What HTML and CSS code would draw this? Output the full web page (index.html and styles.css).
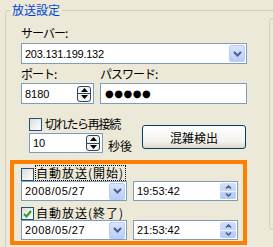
FILE: index.html
```html
<!DOCTYPE html>
<html lang="ja">
<head>
    <meta charset="UTF-8">
    <title>放送設定</title>
    <link rel="stylesheet" href="styles.css">
</head>
<body>

    <fieldset class="group">
        <legend class="group-title">放送設定</legend>
        <div class="group-body">
            <div class="main">

                <!-- server / port / password -->
                <div class="conn">
                    <div class="label">サーバー:</div>
                    <div class="combo server">
                        <span class="val server-val">203.131.199.132</span>
                        <span class="drop"><svg width="9" height="6" viewBox="0 0 9 6"><path d="M1 1l3.5 3.5L8 1" fill="none" stroke="#4D6185" stroke-width="2"/></svg></span>
                    </div>

                    <div class="pair">
                        <div class="field port-field">
                            <div class="label">ポート:</div>
                            <div class="edit port">
                                <span class="val">8180</span>
                                <span class="spin">
                                    <span class="spin-up"><svg width="7" height="4" viewBox="0 0 7 4"><path d="M0 4L3.5 0L7 4z" fill="#000"/></svg></span>
                                    <span class="spin-down"><svg width="7" height="4" viewBox="0 0 7 4"><path d="M0 0L3.5 4L7 0z" fill="#000"/></svg></span>
                                </span>
                            </div>
                        </div>
                        <div class="field pass-field">
                            <div class="label">パスワード:</div>
                            <div class="edit pass"><span class="dots">●●●●●</span></div>
                        </div>
                    </div>

                    <div class="retry">
                        <div class="retry-left">
                            <div class="check">
                                <span class="box"></span>
                                <span class="check-text retry-text">切れたら再接続</span>
                            </div>
                            <div class="retry-wait">
                                <div class="edit wait">
                                    <span class="val">10</span>
                                    <span class="spin">
                                        <span class="spin-up"><svg width="7" height="4" viewBox="0 0 7 4"><path d="M0 4L3.5 0L7 4z" fill="#000"/></svg></span>
                                        <span class="spin-down"><svg width="7" height="4" viewBox="0 0 7 4"><path d="M0 0L3.5 4L7 0z" fill="#000"/></svg></span>
                                    </span>
                                </div>
                                <span class="unit">秒後</span>
                            </div>
                        </div>
                        <button class="btn">混雑検出</button>
                    </div>
                </div>

                <!-- automatic broadcast start / end -->
                <div class="auto">
                    <div class="check auto-check first">
                        <span class="box"></span>
                        <span class="check-text focus">自動放送(開始)</span>
                    </div>
                    <div class="auto-row">
                        <div class="combo date">
                            <span class="val date-val">2008/05/27</span>
                            <span class="drop"><svg width="9" height="6" viewBox="0 0 9 6"><path d="M1 1l3.5 3.5L8 1" fill="none" stroke="#4D6185" stroke-width="2"/></svg></span>
                        </div>
                        <div class="edit time">
                            <span class="val">19:53:42</span>
                            <span class="spin-xp">
                                <span class="xp-up"><svg width="7" height="4" viewBox="0 0 7 4"><path d="M1 3.5l2.5-2.5 2.5 2.5" fill="none" stroke="#4D6185" stroke-width="1.6"/></svg></span>
                                <span class="xp-down"><svg width="7" height="4" viewBox="0 0 7 4"><path d="M1 0.5l2.5 2.5 2.5-2.5" fill="none" stroke="#4D6185" stroke-width="1.6"/></svg></span>
                            </span>
                        </div>
                    </div>

                    <div class="check auto-check second">
                        <span class="box checked"><svg width="9" height="8" viewBox="0 0 9 8"><path d="M1 4l2.5 2.5L8 1" fill="none" stroke="#21A121" stroke-width="2"/></svg></span>
                        <span class="check-text">自動放送(終了)</span>
                    </div>
                    <div class="auto-row">
                        <div class="combo date">
                            <span class="val date-val">2008/05/27</span>
                            <span class="drop"><svg width="9" height="6" viewBox="0 0 9 6"><path d="M1 1l3.5 3.5L8 1" fill="none" stroke="#4D6185" stroke-width="2"/></svg></span>
                        </div>
                        <div class="edit time">
                            <span class="val">21:53:42</span>
                            <span class="spin-xp">
                                <span class="xp-up"><svg width="7" height="4" viewBox="0 0 7 4"><path d="M1 3.5l2.5-2.5 2.5 2.5" fill="none" stroke="#4D6185" stroke-width="1.6"/></svg></span>
                                <span class="xp-down"><svg width="7" height="4" viewBox="0 0 7 4"><path d="M1 0.5l2.5 2.5 2.5-2.5" fill="none" stroke="#4D6185" stroke-width="1.6"/></svg></span>
                            </span>
                        </div>
                    </div>
                </div>

            </div>
            <div class="side"></div>
        </div>
    </fieldset>

</body>
</html>
```

FILE: styles.css
```css
html, body {
    margin: 0;
    overflow: hidden;
    height: 247px;
}
body {
    background-color: #ECE9D8;
    font-family: "Noto Sans CJK JP", sans-serif;
    font-size: 12px;
    color: #000;
}
.group {
    margin: 3px 0 0 5px;
    padding: 0;
    width: 268px;
    height: 244px;
    min-width: 0;
    border: 1px solid #D0D0BF;
    border-right: none;
    border-bottom: none;
    border-radius: 4px 0 0 0;
    box-sizing: border-box;
}
.group-title {
    margin-left: 4px;
    padding: 0 2px;
    line-height: 14px;
    color: #0046D5;
}
.group-body {
    display: flex;
}
.main {
    width: 263px;
    flex: none;
}
.side {
    margin-top: 1px;
    width: 4px;
    height: 212px;
    border: 1px solid #D0D0BF;
    border-right: none;
    border-radius: 4px 0 0 4px;
    box-sizing: border-box;
}
.conn {
    padding-left: 15px;
    padding-top: 9px;
}
.label {
    line-height: 14px;
    letter-spacing: -1px;
    white-space: nowrap;
}
.val {
    font-family: "Liberation Sans", sans-serif;
    font-size: 11px;
    padding-left: 2px;
    flex: 1;
}
.server-val {
    letter-spacing: -0.25px;
}
.date-val {
    letter-spacing: 0.5px;
}

/* edit boxes */
.combo, .edit {
    display: flex;
    align-items: center;
    height: 21px;
    padding: 1px;
    border: 1px solid #7F9DB9;
    background: #fff;
    box-sizing: border-box;
}
.server {
    margin-top: 3px;
    width: 226px;
}
.drop {
    display: flex;
    align-items: center;
    justify-content: center;
    width: 16px;
    height: 17px;
    border: 1px solid #B9CDF8;
    border-radius: 2px;
    background: linear-gradient(#D9E4FD, #B8CDF8);
    box-sizing: border-box;
}
.pair {
    display: flex;
    gap: 6px;
    margin-top: 3px;
}
.field .label {
    margin-bottom: 2px;
}
.port {
    width: 73px;
}
.pass {
    width: 147px;
}
.dots {
    font-family: "DejaVu Sans", sans-serif;
    font-size: 10px;
    padding-left: 3px;
    letter-spacing: 0.5px;
}

/* classic spinner */
.spin {
    display: flex;
    flex-direction: column;
    width: 14px;
    height: 16px;
    margin-right: 1px;
    border: 1px solid #2E4463;
    border-radius: 3px;
    background: #F2F2EE;
    box-sizing: border-box;
    overflow: hidden;
}
.spin-up, .spin-down {
    flex: 1;
    display: flex;
    align-items: center;
    justify-content: center;
}
.spin-up {
    border-bottom: 1px solid #2E4463;
}

/* xp spinner */
.spin-xp {
    display: flex;
    flex-direction: column;
    width: 16px;
    height: 16px;
    border-radius: 2px;
    background: linear-gradient(#D3DFFC, #B4C9F6);
    overflow: hidden;
}
.xp-up, .xp-down {
    flex: 1;
    display: flex;
    align-items: center;
    justify-content: center;
}
.xp-up {
    border-bottom: 1px solid #EEF2FB;
}

/* checkboxes */
.check {
    display: flex;
    align-items: flex-start;
    white-space: nowrap;
}
.box {
    display: flex;
    align-items: center;
    justify-content: center;
    width: 13px;
    height: 13px;
    border: 1px solid #1C5180;
    background: linear-gradient(135deg, #DCDCD7, #fff);
    box-sizing: border-box;
    flex: none;
}
.check-text {
    line-height: 14px;
    margin-left: 3px;
}
.retry-text {
    letter-spacing: -1.3px;
}

/* retry row */
.retry {
    display: flex;
    margin-top: 13px;
}
.retry-left {
    margin-left: 8px;
    width: 113px;
}
.retry .check {
    height: 14px;
}
.retry .box {
    margin-top: 1px;
}
.retry-wait {
    display: flex;
    margin-top: 2px;
}
.wait {
    width: 74px;
    height: 20px;
}
.unit {
    align-self: flex-end;
    line-height: 14px;
    margin-left: 5px;
}
.btn {
    margin-top: 8px;
    width: 104px;
    height: 24px;
    padding: 0;
    font-family: "Noto Sans CJK JP", sans-serif;
    font-size: 12px;
    color: #000;
    border: 1px solid #003C74;
    border-radius: 3px;
    background: linear-gradient(#FFFFFF, #F4F3EE 70%, #DCD8CC);
}

/* automatic broadcast box */
.auto {
    margin: 7px 0 0 4px;
    width: 237px;
    height: 85px;
    padding-left: 7px;
    border: 4px solid #FF8000;
    box-sizing: border-box;
}
.auto-check .check-text {
    margin-left: 2px;
    letter-spacing: 1px;
}
.auto-check.first {
    height: 17px;
}
.auto-check.first .box {
    margin-top: 4px;
}
.auto-check.first .check-text {
    margin-top: 2px;
    padding-right: 1px;
}
.focus {
    outline: 1px dotted #000;
    outline-offset: 0;
}
.auto-check.second {
    height: 19px;
}
.auto-check.second .box {
    margin-top: 6px;
}
.auto-check.second .check-text {
    margin-top: 5px;
}
.auto-row {
    display: flex;
    gap: 6px;
}
.date {
    width: 106px;
    height: 20px;
}
.time {
    width: 105px;
    height: 20px;
}
```
